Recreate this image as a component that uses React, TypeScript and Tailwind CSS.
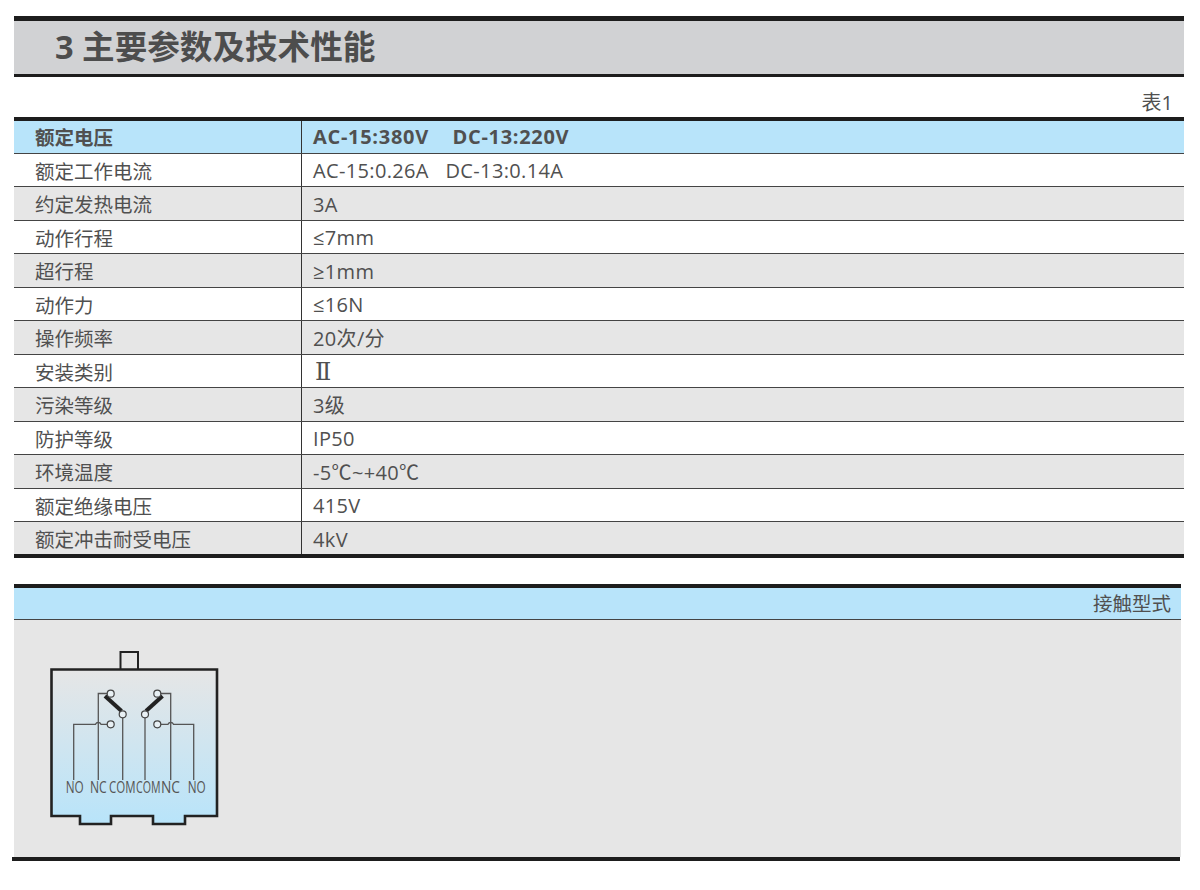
const fontStack = { fontFamily: '"Open Sans", "Noto Sans CJK SC", sans-serif' }

const rows = [
  { label: '额定电压', value: 'AC-15:380V\u00a0\u00a0\u00a0\u00a0DC-13:220V', tone: 'head' },
  { label: '额定工作电流', value: 'AC-15:0.26A\u00a0\u00a0\u00a0DC-13:0.14A', tone: 'white' },
  { label: '约定发热电流', value: '3A', tone: 'grey' },
  { label: '动作行程', value: '≤7mm', tone: 'white' },
  { label: '超行程', value: '≥1mm', tone: 'grey' },
  { label: '动作力', value: '≤16N', tone: 'white' },
  { label: '操作频率', value: '20次/分', tone: 'grey' },
  { label: '安装类别', value: 'Ⅱ', tone: 'white' },
  { label: '污染等级', value: '3级', tone: 'grey' },
  { label: '防护等级', value: 'IP50', tone: 'white' },
  { label: '环境温度', value: '-5℃~+40℃', tone: 'grey' },
  { label: '额定绝缘电压', value: '415V', tone: 'white' },
  { label: '额定冲击耐受电压', value: '4kV', tone: 'grey' },
]

function ContactDiagram() {
  const wire = { stroke: '#555', strokeWidth: 1.3, fill: 'none' }
  const circle = { stroke: '#444', strokeWidth: 1.2, fill: '#e8f0f4' }
  const labels = [
    { text: 'NO', x: 65.7, w: 18 },
    { text: 'NC', x: 90, w: 16.7 },
    { text: 'COM', x: 109, w: 26.5 },
    { text: 'COM', x: 136, w: 24.5 },
    { text: 'NC', x: 161, w: 19 },
    { text: 'NO', x: 187.7, w: 18 },
  ]
  return (
    <svg width="210" height="200" viewBox="30 640 210 200" className="block">
      <defs>
        <linearGradient id="boxFill" x1="0" y1="0" x2="0" y2="1">
          <stop offset="0" stopColor="#e6e6e6" />
          <stop offset="1" stopColor="#b8e4fa" />
        </linearGradient>
      </defs>
      <path d="M120.5 669V652H138V669" fill="#e6e6e6" stroke="#222" strokeWidth="2" />
      <path
        d="M51.5 669.5H217V816H185V824H153V816H111V824H80V816H51.5Z"
        fill="url(#boxFill)"
        stroke="#222"
        strokeWidth="2.6"
      />
      {/* left switch */}
      <path d="M73.7 780V724.3H95.5A3 3 0 0 1 101 724.3H107.3" {...wire} />
      <path d="M98.3 780V693.5H107.4" {...wire} />
      <path d="M122.7 717.6V780" {...wire} />
      <path d="M105 696L121.5 711" stroke="#222" strokeWidth="4" fill="none" />
      <circle cx="110.7" cy="693.7" r="3.5" {...circle} />
      <circle cx="110.7" cy="724.3" r="3.5" {...circle} />
      <circle cx="122.7" cy="714.3" r="3.5" {...circle} />
      {/* right switch */}
      <path d="M193.7 780V724.3H173.5A3 3 0 0 0 168 724.3H160.6" {...wire} />
      <path d="M170.7 780V693.5H160.6" {...wire} />
      <path d="M145 717.6V780" {...wire} />
      <path d="M162.5 696L146 711" stroke="#222" strokeWidth="4" fill="none" />
      <circle cx="157.3" cy="693.7" r="3.5" {...circle} />
      <circle cx="157.3" cy="724.3" r="3.5" {...circle} />
      <circle cx="145" cy="714.3" r="3.5" {...circle} />
      {labels.map((l, i) => (
        <text
          key={i}
          x={l.x}
          y="792.5"
          fontSize="16"
          fill="#555"
          textLength={l.w}
          lengthAdjust="spacingAndGlyphs"
          style={fontStack}
        >
          {l.text}
        </text>
      ))}
    </svg>
  )
}

export default function App() {
  return (
    <div className="h-[890px] w-[1200px] overflow-hidden bg-white pt-4 text-[#505050]" style={fontStack}>
      <div className="ml-[14px] flex h-[61px] w-[1170px] items-center border-t-[5px] border-b-[3px] border-[#1d1d1d] bg-[#d1d2d4] pl-[41px] text-[32.6px] font-bold text-[#4d4d4d]">
        3 主要参数及技术性能
      </div>

      <div className="flex h-[40px] w-[1173px] items-end justify-end text-[20px] leading-[28px]">表1</div>

      <div className="ml-[14px] w-[1170px] border-t-4 border-b-4 border-t-[#1d1d1d] border-b-[#1d1d1d]">
        {rows.map((row, i) => (
          <div
            key={row.label}
            className={[
              'flex items-center text-[19.5px]',
              i === 0 ? 'h-[32.5px]' : i === rows.length - 1 ? 'h-[32px]' : 'h-[33.5px]',
              i < rows.length - 1 ? 'border-b border-[#444]' : '',
              row.tone === 'head' ? 'bg-[#b8e4fa] font-bold' : row.tone === 'grey' ? 'bg-[#e6e6e6]' : 'bg-white',
            ].join(' ')}
          >
            <div className={`flex h-full w-[288px] items-center border-r border-[#333] pl-[21px] ${i === 0 ? 'pt-px' : 'pt-[3px]'}`}>
              {row.label}
            </div>
            {row.value === 'Ⅱ' ? (
              <div className="pt-[3px] pl-[13px] font-['DejaVu_Serif'] text-[24px] leading-none">{row.value}</div>
            ) : (
              <div className={`pl-[11px] text-[20px] ${i === 0 ? 'pt-px tracking-[0.7px]' : 'pt-[3px] tracking-[0.35px]'}`}>
                {row.value}
              </div>
            )}
          </div>
        ))}
      </div>

      <div className="mt-[26px] ml-[14px] w-[1167px]">
        <div className="flex h-[36px] items-center justify-end border-t-4 border-b border-t-[#1d1d1d] border-b-[#444] bg-[#b8e4fa] pr-[10px] text-[19.5px]">
          接触型式
        </div>
        <div className="h-[237px] bg-[#e6e6e6] pt-[20px] pl-4">
          <ContactDiagram />
        </div>
      </div>
      <div className="ml-3 h-1 w-[1168px] bg-[#1d1d1d]" />
    </div>
  )
}
